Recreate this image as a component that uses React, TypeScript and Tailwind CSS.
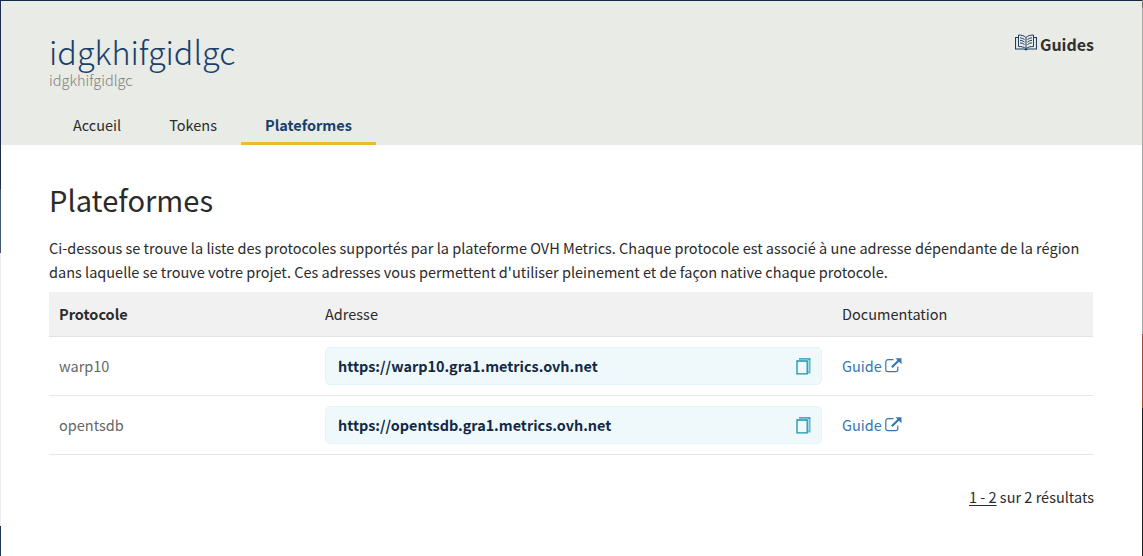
import { ReactNode } from "react";

function BookIcon() {
  return (
    <svg className="mb-[3px]" width="22" height="17" viewBox="0 0 22 17" fill="none" stroke="#1f3d63" strokeWidth="1">
      <path d="M3 3.500H.5v11.500h8.500l2 .8 2-.8h8.500V3.500H19" strokeWidth="1.100" />
      <path d="M3.500 1c3.200 0 6 .8 7.500 2.700C12.500 1.800 15.300 1 18.500 1v11.500c-3.200 0-6 .6-7.500 2.200-1.500-1.600-4.300-2.200-7.500-2.200zM11 3.700v11" />
      <path d="M5 3.800c1.800.2 3.300.7 4.500 1.700M5 6.300c1.800.2 3.300.7 4.500 1.700M5 8.800c1.800.2 3.300.7 4.500 1.700M17 3.800c-1.800.2-3.300.7-4.500 1.700M17 6.300c-1.800.2-3.300.7-4.500 1.700M17 8.800c-1.800.2-3.300.7-4.500 1.700" />
    </svg>
  );
}

function CopyIcon() {
  return (
    <svg width="15" height="17" viewBox="0 0 15 17" fill="none" stroke="#1793b0">
      <path d="M13.500 1v13.500h-1.500" stroke="#62bccd" strokeWidth="2" />
      <path d="M3 .9h11.500" strokeWidth="1.300" />
      <path d="M1 3h10.200v12.800H1z" strokeWidth="1.300" />
    </svg>
  );
}

function ExternalIcon() {
  return (
    <svg className="mb-[2px]" width="17" height="15" viewBox="0 0 17 15" fill="none" stroke="#3576b5">
      <path d="M8.500 1.700H3A2.200 2.200 0 0 0 .8 3.900v7.600a2.200 2.200 0 0 0 2.200 2.200h7.600a2.200 2.200 0 0 0 2.200-2.200V8.500" strokeWidth="1.200" />
      <path d="M6.800 9.200 14 2.200" strokeWidth="2.200" />
      <path d="M10.500.2h6v6z" fill="#3576b5" stroke="none" />
    </svg>
  );
}

function Row({ name, url }: { name: string; url: string }) {
  return (
    <div className="flex h-[59px] items-center border-b border-[#e7e7e7]">
      <div className="w-[276px] pl-[10px] text-[#666]">{name}</div>
      <div className="flex h-[38px] w-[497px] items-center justify-between rounded-[5px] border border-[#dff5fa] bg-[#eff9fc] pr-[10px] pl-[12px]">
        <span className="text-[14.4px] font-bold text-[#122844]">{url}</span>
        <CopyIcon />
      </div>
      <a className="ml-5 flex items-center gap-[3px] text-[#3576b5]">
        Guide
        <ExternalIcon />
      </a>
    </div>
  );
}

function Tab({ children, active }: { children: ReactNode; active?: boolean }) {
  return (
    <div
      className={
        active
          ? "h-[39px] border-b-[3px] border-[#ebbb30] px-6 leading-[37px] font-bold text-[#19406b]"
          : "h-[39px] px-6 leading-[37px]"
      }
    >
      {children}
    </div>
  );
}

export default function App() {
  return (
    <div className="flex h-[556px] w-[1143px] overflow-hidden bg-white font-['Noto_Sans_CJK_SC',sans-serif] text-[14.5px] leading-6 text-[#2b2b2b]">
      <div className="flex w-px shrink-0 flex-col">
        <div className="h-[189px] bg-[#1d2d4d]" />
        <div className="h-[64px] bg-[#415877]" />
        <div className="h-[273px] bg-[#ececec]" />
        <div className="h-[30px] bg-[#20355c]" />
      </div>
      <div className="flex w-[1141px] shrink-0 flex-col">
        <header className="flex h-[145px] flex-col justify-between border-t border-[#14284b] bg-[#e8ebe6] px-[48px]">
          <div className="flex justify-between pt-[29px]">
            <div>
              <h1 className="h-[42px] text-[32.4px] leading-[42px] font-light whitespace-nowrap text-[#19406b]">idgkhifgidlgc</h1>
              <div className="h-4 leading-4 font-light text-[#808080]">idgkhifgidlgc</div>
            </div>
            <div className="flex h-[28px] items-center gap-[3px] text-[16px] font-bold text-[#303030]">
              <BookIcon />
              Guides
            </div>
          </div>
          <nav className="flex">
            <Tab>Accueil</Tab>
            <Tab>Tokens</Tab>
            <Tab active>Plateformes</Tab>
          </nav>
        </header>
        <main className="flex flex-col pt-[35px] pr-[49px] pl-[48px]">
          <h2 className="h-14 text-[29.1px] leading-[38px]">Plateformes</h2>
          <p className="h-[56px] whitespace-nowrap">
            Ci-dessous se trouve la liste des protocoles supportés par la plateforme OVH Metrics. Chaque protocole est associé à une adresse dépendante de la région
            <br />
            dans laquelle se trouve votre projet. Ces adresses vous permettent d'utiliser pleinement et de façon native chaque protocole.
          </p>
          <div className="flex h-[45px] items-center border-b border-[#e3e3e3] bg-[#f1f1f1]">
            <div className="w-[276px] pl-[10px] font-bold">Protocole</div>
            <div className="w-[517px]">Adresse</div>
            <div>Documentation</div>
          </div>
          <Row name="warp10" url="https://warp10.gra1.metrics.ovh.net" />
          <Row name="opentsdb" url="https://opentsdb.gra1.metrics.ovh.net" />
          <div className="mt-[30px] -mr-px text-right">
            <span className="underline underline-offset-2">1 - 2</span> sur 2 résultats
          </div>
        </main>
      </div>
      <div className="flex w-px shrink-0 flex-col">
        <div className="h-[8px] bg-[#777]" />
        <div className="h-[326px] bg-[#a5a5a5]" />
        <div className="h-[74px] bg-[#96502f]" />
        <div className="h-[148px] bg-[#1c1c20]" />
      </div>
    </div>
  );
}
